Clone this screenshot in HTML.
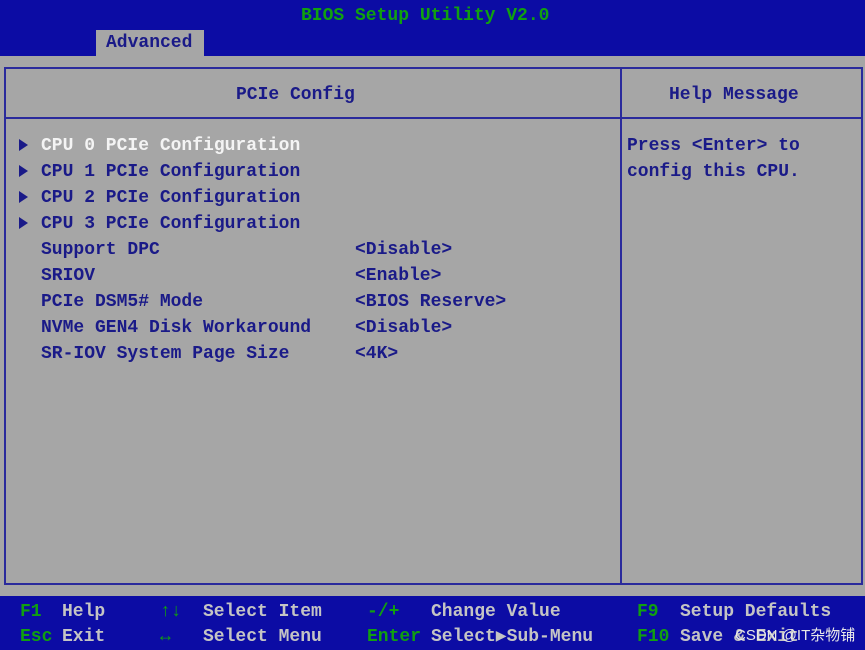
<!DOCTYPE html><html><head><meta charset="utf-8"><style>
*{margin:0;padding:0}
body{width:865px;height:650px;background:#a6a6a6;position:relative;overflow:hidden;font-family:"Liberation Mono","DejaVu Sans Mono",monospace;font-size:18px;font-weight:bold}
.a{position:absolute;white-space:pre;line-height:20px}
#top{position:absolute;left:0;top:0;width:865px;height:56px;background:#0c0ca4}
#bot{position:absolute;left:0;top:596px;width:865px;height:54px;background:#0c0ca4}
.g{color:#10a010}.w{color:#f4f4f4}.b{color:#1a1a88}.l{color:#c4c4c4}
.t{position:absolute;left:19px;width:0;height:0;border-top:6px solid transparent;border-bottom:6px solid transparent;border-left:9px solid #1a1a88}
</style></head><body>
<div id="top"></div>
<div class="a g" style="left:301px;top:6px">BIOS Setup Utility V2.0</div>
<div style="position:absolute;left:96px;top:30px;width:108px;height:26px;background:#a6a6a6"></div>
<div class="a b" style="left:106px;top:33px">Advanced</div>
<div style="position:absolute;left:4px;top:67px;width:855px;height:514px;border:2px solid #2a2a9c"></div>
<div style="position:absolute;left:4px;top:117px;width:857px;height:2px;background:#2a2a9c"></div>
<div style="position:absolute;left:620px;top:67px;width:2px;height:516px;background:#2a2a9c"></div>
<div class="a b" style="left:236px;top:85px">PCIe Config</div>
<div class="a b" style="left:669px;top:85px">Help Message</div>
<div class="t" style="top:139px"></div>
<div class="t" style="top:165px"></div>
<div class="t" style="top:191px"></div>
<div class="t" style="top:217px"></div>
<div class="a w" style="left:41px;top:136px">CPU 0 PCIe Configuration</div>
<div class="a b" style="left:41px;top:159px;line-height:26px">CPU 1 PCIe Configuration
CPU 2 PCIe Configuration
CPU 3 PCIe Configuration
Support DPC
SRIOV
PCIe DSM5# Mode
NVMe GEN4 Disk Workaround
SR-IOV System Page Size</div>
<div class="a b" style="left:355px;top:237px;line-height:26px">&lt;Disable&gt;
&lt;Enable&gt;
&lt;BIOS Reserve&gt;
&lt;Disable&gt;
&lt;4K&gt;</div>
<div class="a b" style="left:627px;top:133px;line-height:26px">Press &lt;Enter&gt; to
config this CPU.</div>
<div id="bot"></div>
<div class="a g" style="left:20px;top:600px;line-height:25px">F1
Esc</div>
<div class="a l" style="left:62px;top:600px;line-height:25px">Help
Exit</div>
<div class="a g" style="left:160px;top:600px;line-height:25px">↑↓
↔</div>
<div class="a l" style="left:203px;top:600px;line-height:25px">Select Item
Select Menu</div>
<div class="a g" style="left:367px;top:600px;line-height:25px">-/+
Enter</div>
<div class="a l" style="left:431px;top:600px;line-height:25px">Change Value
Select▶Sub-Menu</div>
<div class="a g" style="left:637px;top:600px;line-height:25px">F9
F10</div>
<div class="a l" style="left:680px;top:600px;line-height:25px">Setup Defaults
Save &amp; Exit</div>
<div class="a" style="left:735px;top:626px;font-family:'Liberation Sans','Noto Sans CJK SC',sans-serif;font-weight:normal;font-size:15px;color:#e8e8e8">CSDN @IT杂物铺</div>
</body></html>
